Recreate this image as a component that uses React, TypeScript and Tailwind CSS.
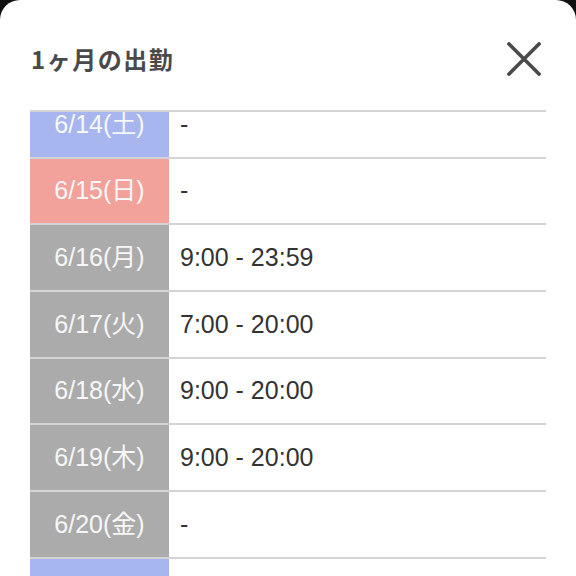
import { useEffect, useRef } from "react"

type Day = {
  date: string
  time: string
  kind: "sat" | "sun" | "weekday"
}

const DAYS: Day[] = [
  { date: "6/14(土)", time: "-", kind: "sat" },
  { date: "6/15(日)", time: "-", kind: "sun" },
  { date: "6/16(月)", time: "9:00 - 23:59", kind: "weekday" },
  { date: "6/17(火)", time: "7:00 - 20:00", kind: "weekday" },
  { date: "6/18(水)", time: "9:00 - 20:00", kind: "weekday" },
  { date: "6/19(木)", time: "9:00 - 20:00", kind: "weekday" },
  { date: "6/20(金)", time: "-", kind: "weekday" },
  { date: "6/21(土)", time: "-", kind: "sat" },
]

const DATE_BG = {
  sat: "bg-[#a7b6ef]",
  sun: "bg-[#f2a29b]",
  weekday: "bg-[#ababab]",
} as const

function CloseIcon() {
  return (
    <svg width="34" height="34" viewBox="0 0 34 34" fill="none">
      <path d="M2 2L32 32M32 2L2 32" stroke="#4a4a4a" strokeWidth="3.6" strokeLinecap="square" />
    </svg>
  )
}

export default function App() {
  const listRef = useRef<HTMLDivElement>(null)

  // list is shown scrolled a little past the first row
  useEffect(() => {
    if (listRef.current) listRef.current.scrollTop = 20
  }, [])

  return (
    <div className="h-[576px] w-full bg-[#111111]" style={{ fontFamily: '"Liberation Sans", "Noto Sans CJK JP", sans-serif' }}>
      <div className="flex h-full flex-col rounded-t-[20px] bg-white px-[30px]">
        <div className="flex h-[110px] shrink-0 items-center justify-between pt-[8px]">
          <h1
            className="pl-[1px] text-[24px] font-bold tracking-[1.5px] text-[#4a4a4a]"
            style={{ fontFamily: '"Noto Sans CJK JP", sans-serif' }}
          >
            1ヶ月の出勤
          </h1>
          <button type="button" className="flex h-[44px] w-[44px] items-center justify-center">
            <CloseIcon />
          </button>
        </div>

        <div ref={listRef} className="min-h-0 flex-1 overflow-hidden border-t-2 border-[#d4d4d4]">
          {DAYS.map((day) => (
            <div key={day.date} className="flex h-[66.67px] border-b-2 border-[#d4d4d4]">
              <div
                className={`flex w-[139px] shrink-0 items-center justify-center text-[25px] text-[#f7f7f7] ${DATE_BG[day.kind]}`}
              >
                {day.date}
              </div>
              <div className="flex flex-1 items-center pl-[11px] text-[25px] text-[#333333]">{day.time}</div>
            </div>
          ))}
        </div>
      </div>
    </div>
  )
}
